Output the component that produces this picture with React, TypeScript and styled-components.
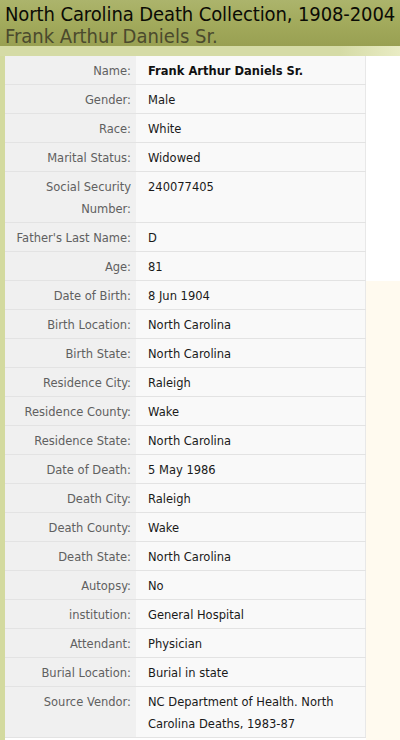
import React from 'react'
import styled, { createGlobalStyle } from 'styled-components'

interface Field {
  label: string;
  value: string;
  strong?: boolean;
}

const fields: Field[] = [
  { label: 'Name:', value: 'Frank Arthur Daniels Sr.', strong: true },
  { label: 'Gender:', value: 'Male' },
  { label: 'Race:', value: 'White' },
  { label: 'Marital Status:', value: 'Widowed' },
  { label: 'Social Security Number:', value: '240077405' },
  { label: "Father's Last Name:", value: 'D' },
  { label: 'Age:', value: '81' },
  { label: 'Date of Birth:', value: '8 Jun 1904' },
  { label: 'Birth Location:', value: 'North Carolina' },
  { label: 'Birth State:', value: 'North Carolina' },
  { label: 'Residence City:', value: 'Raleigh' },
  { label: 'Residence County:', value: 'Wake' },
  { label: 'Residence State:', value: 'North Carolina' },
  { label: 'Date of Death:', value: '5 May 1986' },
  { label: 'Death City:', value: 'Raleigh' },
  { label: 'Death County:', value: 'Wake' },
  { label: 'Death State:', value: 'North Carolina' },
  { label: 'Autopsy:', value: 'No' },
  { label: 'institution:', value: 'General Hospital' },
  { label: 'Attendant:', value: 'Physician' },
  { label: 'Burial Location:', value: 'Burial in state' },
  { label: 'Source Vendor:', value: 'NC Department of Health. North Carolina Deaths, 1983-87' },
]

export default function App() {
  return (
    <Page>
      <GlobalStyle />
      <Header>
        <Title>North Carolina Death Collection, 1908-2004</Title>
        <Subtitle>Frank Arthur Daniels Sr.</Subtitle>
      </Header>
      <Band />
      <Body>
        <Stripe />
        <Table>
          <tbody>
            {fields.map(f => (
              <tr key={f.label}>
                <Label>{f.label}</Label>
                <Value $strong={f.strong}>{f.value}</Value>
              </tr>
            ))}
          </tbody>
        </Table>
        <Side />
      </Body>
    </Page>
  )
}

const GlobalStyle = createGlobalStyle`
  html, body { margin: 0; padding: 0; background: #fff; }
  body { font-family: "DejaVu Sans Condensed", "DejaVu Sans", sans-serif; }
`
const Page = styled.div`
  width: 400px; min-height: 740px; display: flex; flex-direction: column; overflow: hidden;
`
const Header = styled.div`
  background: linear-gradient(to bottom, #acb46c 0%, #a2aa5c 50%, #99a052 100%);
  padding: 3px 5px 0 5px; height: 46px; box-sizing: border-box;
`
const Title = styled.div`
  font-family: "DejaVu Sans Condensed", "DejaVu Sans", sans-serif;
  font-size: 20px; line-height: 23px; color: #0b0b05; white-space: nowrap; letter-spacing: -0.1px;
`
const Subtitle = styled.div`
  font-family: "DejaVu Sans Condensed", "DejaVu Sans", sans-serif;
  font-size: 20px; line-height: 20px; color: #4b4a2d; white-space: nowrap;
`
const Band = styled.div`
  height: 10px; background: linear-gradient(to right, #d5dba6 0%, #d5dba6 85%, #e9ecc4 100%);
`
const Body = styled.div`
  display: grid; grid-template-columns: 5px 361px 1fr; flex: 1;
`
const Stripe = styled.div`
  background: #d3da9f;
`
const Side = styled.div`
  background: linear-gradient(to bottom, #fff 225px, #fffaef 225px);
`
const Table = styled.table`
  border-collapse: collapse; width: 361px; align-self: start;
  border-right: 1px solid #e8e8e8;
  font-family: "DejaVu Sans", sans-serif; font-size: 11.5px;
  tr { border-bottom: 1px solid #e3e3e3; }
`
const Label = styled.td`
  width: 131px; box-sizing: border-box; background: #f0f0f0; color: #606060;
  text-align: right; vertical-align: top; padding: 4px 5px 2px 8px; line-height: 22px;
`
const Value = styled.td<{ $strong?: boolean }>`
  background: #f9f9f9; color: ${p => p.$strong ? '#111' : '#1a1a1a'};
  font-weight: ${p => p.$strong ? 700 : 400};
  vertical-align: top; padding: 4px 10px 2px 12px; line-height: 22px;
`
